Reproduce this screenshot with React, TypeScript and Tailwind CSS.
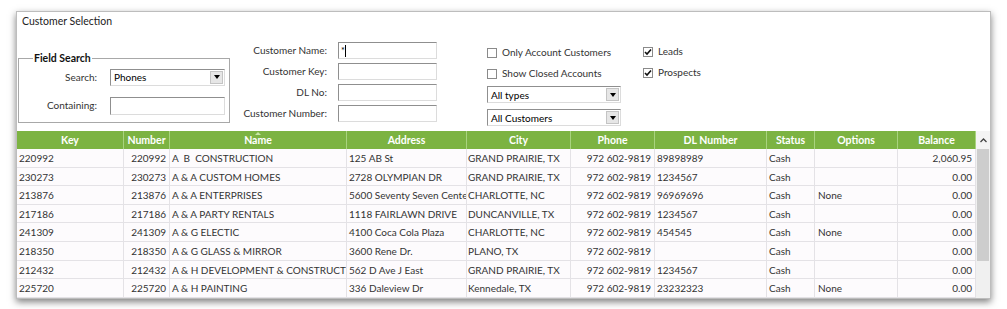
import { Fragment } from "react";

const cols = [
  { name: "Key", w: "w-[107px]", align: "text-left pl-[2px]" },
  { name: "Number", w: "w-[46px]", align: "text-right pr-[3px]" },
  { name: "Name", w: "w-[177px]", align: "text-left pl-[2px]" },
  { name: "Address", w: "w-[120px]", align: "text-left pl-[2px]" },
  { name: "City", w: "w-[104px]", align: "text-left pl-[1px]" },
  { name: "Phone", w: "w-[84px]", align: "text-right pr-[3px]" },
  { name: "DL Number", w: "w-[112px]", align: "text-left pl-[2px]" },
  { name: "Status", w: "w-[48px]", align: "text-left pl-[2px]" },
  { name: "Options", w: "w-[83px]", align: "text-left pl-[3px]" },
  { name: "Balance", w: "w-[78px]", align: "text-right pr-[3px]" },
];

const rows = [
  ["220992", "220992", "A  B  CONSTRUCTION", "125 AB St", "GRAND PRAIRIE, TX", "972 602-9819", "89898989", "Cash", "", "2,060.95"],
  ["230273", "230273", "A & A CUSTOM HOMES", "2728 OLYMPIAN DR", "GRAND PRAIRIE, TX", "972 602-9819", "1234567", "Cash", "", "0.00"],
  ["213876", "213876", "A & A ENTERPRISES", "5600 Seventy Seven Cente", "CHARLOTTE, NC", "972 602-9819", "96969696", "Cash", "None", "0.00"],
  ["217186", "217186", "A & A PARTY RENTALS", "1118 FAIRLAWN DRIVE", "DUNCANVILLE, TX", "972 602-9819", "1234567", "Cash", "", "0.00"],
  ["241309", "241309", "A & G ELECTIC", "4100 Coca Cola Plaza", "CHARLOTTE, NC", "972 602-9819", "454545", "Cash", "None", "0.00"],
  ["218350", "218350", "A & G GLASS & MIRROR", "3600 Rene Dr.", "PLANO, TX", "972 602-9819", "", "Cash", "", "0.00"],
  ["212432", "212432", "A & H DEVELOPMENT & CONSTRUCTIC", "562 D Ave J East", "GRAND PRAIRIE, TX", "972 602-9819", "1234567", "Cash", "", "0.00"],
  ["225720", "225720", "A & H PAINTING", "336 Daleview Dr", "Kennedale, TX", "972 602-9819", "23232323", "Cash", "None", "0.00"],
];

const inset = "border border-t-[#8f8f8f] border-l-[#8f8f8f] border-b-[#dcdcdc] border-r-[#dcdcdc] bg-white";

function Select({ value, w }: { value: string; w: string }) {
  return (
    <div className={`${inset} ${w} h-[17px] flex items-center`}>
      <span className="flex-1 pl-[3px] text-[10px] text-black leading-none">{value}</span>
      <span className="w-[13px] h-[13px] mr-[1px] bg-[#e6e6e6] border border-[#c4c4c4] flex items-center justify-center">
        <span className="w-0 h-0 border-l-[3px] border-r-[3px] border-t-[4px] border-l-transparent border-r-transparent border-t-black" />
      </span>
    </div>
  );
}

function Check({ label, checked }: { label: string; checked?: boolean }) {
  return (
    <div className="flex items-center gap-[5px] h-[21px]">
      <span className="w-[10px] h-[10px] border border-[#8a8a8a] bg-white flex items-center justify-center">
        {checked && (
          <svg width="8" height="8" viewBox="0 0 8 8">
            <path d="M1 4 L3 6 L7 1.5" stroke="#111" strokeWidth="1.6" fill="none" />
          </svg>
        )}
      </span>
      <span className="text-[10px] text-[#333]">{label}</span>
    </div>
  );
}

export default function App() {
  return (
    <div className="w-[1007px] h-[309px] bg-white pt-[11px] pl-[16px] font-['Lato',sans-serif]">
      <div className="w-[975px] h-[288px] border border-[#bdbdbd] bg-white shadow-[0_3px_7px_rgba(0,0,0,0.5)] flex flex-col">
        <div className="h-[28px] pl-[5px] pt-[2px] text-[10.5px] text-[#222]">Customer Selection</div>
        <div className="h-[91px] flex items-start">
          <fieldset className="ml-[1px] mt-[11px] w-[212px] h-[72px] border border-[#a8a8a8] pl-[8px]">
            <legend className="ml-[6px] px-[1px] text-[10.5px] font-bold text-[#111]">Field Search</legend>
            <div className="grid grid-cols-[70px_115px] gap-x-[13px] items-center gap-y-[11px] mt-[2px]">
              <span className="text-right text-[10px] text-[#333]">Search:</span>
              <Select value="Phones" w="w-[115px]" />
              <span className="text-right text-[10px] text-[#333]">Containing:</span>
              <div className={`${inset} w-[115px] h-[18px]`} />
            </div>
          </fieldset>
          <div className="ml-[2px] mt-[2px] grid grid-cols-[95px_99px] gap-x-[11px] gap-y-[4px] items-center">
            <span className="text-right text-[10px] text-[#333]">Customer Name:</span>
            <div className={`${inset} h-[17px] flex items-center pl-[2px]`}>
              <span className="text-[9px] text-black leading-none">*</span>
              <span className="w-px h-[12px] bg-black" />
            </div>
            <span className="text-right text-[10px] text-[#333]">Customer Key:</span>
            <div className={`${inset} h-[17px]`} />
            <span className="text-right text-[10px] text-[#333]">DL No:</span>
            <div className={`${inset} h-[17px]`} />
            <span className="text-right text-[10px] text-[#333]">Customer Number:</span>
            <div className={`${inset} h-[17px]`} />
          </div>
          <div className="ml-[50px] mt-[2px] w-[156px] flex flex-col">
            <Check label="Only Account Customers" />
            <Check label="Show Closed Accounts" />
            <div className="mt-[2px]">
              <Select value="All types" w="w-[134px]" />
            </div>
            <div className="mt-[6px]">
              <Select value="All Customers" w="w-[134px]" />
            </div>
          </div>
          <div className="mt-[1px] flex flex-col">
            <Check label="Leads" checked />
            <Check label="Prospects" checked />
          </div>
        </div>
        <div className="flex-1 flex">
          <div className="w-[959px] flex flex-col">
            <div className="flex h-[18px] bg-[#7cb342]">
              {cols.map((c, i) => (
                <div
                  key={c.name}
                  className={`${c.w} relative shrink-0 border-r border-[#a9d37f] text-center text-[10.5px] font-bold text-white leading-[18px]`}
                >
                  {i === 2 && (
                    <span className="absolute left-1/2 top-[1px] -translate-x-1/2 w-0 h-0 border-l-[3px] border-r-[3px] border-b-[3px] border-l-transparent border-r-transparent border-b-[#c8e6a8]" />
                  )}
                  {c.name}
                </div>
              ))}
            </div>
            {rows.map((r, ri) => (
              <div key={ri} className="flex h-[18.6px] bg-[#fdfbfd] border-b border-[#e4e2e6]">
                {r.map((v, ci) => (
                  <Fragment key={ci}>
                    <div
                      className={`${cols[ci].w} ${cols[ci].align} shrink-0 overflow-hidden whitespace-pre border-r border-[#e4e2e6] text-[10px] text-[#333] leading-[18px]`}
                    >
                      {v}
                    </div>
                  </Fragment>
                ))}
              </div>
            ))}
          </div>
          <div className="w-[14px] flex flex-col bg-[#f0f0f0]">
            <div className="h-[18px] flex items-center justify-center bg-[#f4f4f4]">
              <svg width="7" height="5" viewBox="0 0 7 5">
                <path d="M0.5 4 L3.5 1 L6.5 4" stroke="#444" strokeWidth="1.3" fill="none" />
              </svg>
            </div>
            <div className="h-[112px] mx-[1px] bg-[#cdcdcd]" />
          </div>
        </div>
      </div>
    </div>
  );
}
